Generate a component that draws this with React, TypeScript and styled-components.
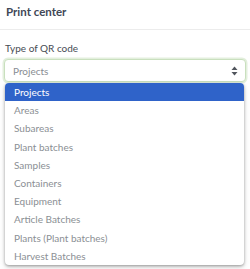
import styled, { createGlobalStyle } from "styled-components";

const GlobalStyle = createGlobalStyle`
  html, body {
    margin: 0;
    padding: 0;
    background: #ffffff;
  }
  body {
    font-family: Lato, "Noto Sans", sans-serif;
    width: 250px;
    height: 269px;
    overflow: hidden;
  }
`;

const Page = styled.div`
  position: relative;
  width: 250px;
  height: 269px;
  background: #fff;
`;

const Header = styled.div`
  height: 30px;
  padding: 0 6px 7px 6px;
  display: flex;
  align-items: center;
  border-bottom: 1px solid #ececec;
  box-sizing: border-box;
`;

const Title = styled.h2`
  margin: 0;
  font-size: 11.5px;
  font-weight: 700;
  color: #404756;
`;

const Body = styled.div`
  padding: 11px 4px 0 4px;
`;

const Label = styled.label`
  display: block;
  font-size: 10px;
  line-height: 14px;
  color: #474c54;
  padding-left: 1px;
  margin-bottom: 4px;
`;

const SelectWrap = styled.div`
  position: relative;
`;

const SelectBox = styled.div`
  height: 21px;
  border: 1px solid #c9e0be;
  box-shadow: 0 0 0 1.5px #e3efdd;
  border-radius: 4px;
  display: flex;
  align-items: center;
  justify-content: space-between;
  padding: 0 7px 0 8px;
  font-size: 10px;
  color: #888c92;
  background: #fff;
`;

const Arrows = styled.svg`
  width: 7px;
  height: 10px;
  color: #50555c;
`;

const Menu = styled.ul`
  position: absolute;
  left: 1px;
  right: 2px;
  top: 24px;
  margin: 0;
  padding: 0;
  list-style: none;
  background: #fff;
  border-radius: 4px;
  overflow: hidden;
  box-shadow: 0 1px 3px rgba(0, 0, 0, 0.35), 0 3px 6px rgba(0, 0, 0, 0.12);
`;

const Option = styled.li<{ $active?: boolean }>`
  height: 18.2px;
  display: flex;
  align-items: center;
  padding-left: 9px;
  font-size: 10px;
  color: ${(p) => (p.$active ? "#ffffff" : "#8b8f94")};
  background: ${(p) => (p.$active ? "#2f63c9" : "transparent")};
`;

const options = [
  "Projects",
  "Areas",
  "Subareas",
  "Plant batches",
  "Samples",
  "Containers",
  "Equipment",
  "Article Batches",
  "Plants (Plant batches)",
  "Harvest Batches",
];

export default function App() {
  return (
    <>
      <GlobalStyle />
      <Page>
        <Header>
          <Title>Print center</Title>
        </Header>
        <Body>
          <Label>Type of QR code</Label>
          <SelectWrap>
            <SelectBox>
              <span>Projects</span>
              <Arrows viewBox="0 0 7 10">
                <path d="M3.5 0.5 L6.5 4 H0.5 Z" fill="currentColor" />
                <path d="M3.5 9.5 L6.5 6 H0.5 Z" fill="currentColor" />
              </Arrows>
            </SelectBox>
            <Menu>
              {options.map((o, i) => (
                <Option key={o} $active={i === 0}>
                  {o}
                </Option>
              ))}
            </Menu>
          </SelectWrap>
        </Body>
      </Page>
    </>
  );
}
